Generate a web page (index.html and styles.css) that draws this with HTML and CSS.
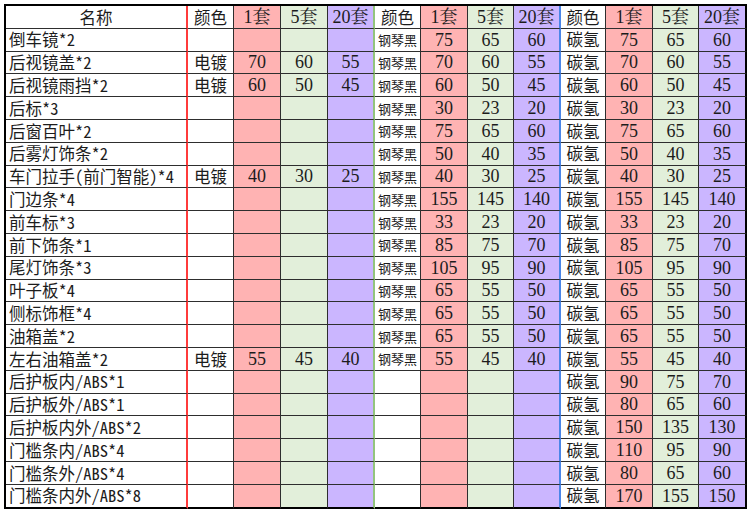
FILE: index.html
```html
<!DOCTYPE html>
<html lang="zh-CN">
<head>
<meta charset="utf-8">
<title>价格表</title>
<link rel="stylesheet" href="styles.css">
</head>
<body>
<table class="sheet">
  <colgroup>
    <col class="w-name"><col class="w46"><col class="w47"><col class="w47"><col class="w47">
    <col class="w46"><col class="w47"><col class="w46"><col class="w47">
    <col class="w45"><col class="w47"><col class="w46"><col class="w48">
  </colgroup>
  <thead>
    <tr>
      <th class="name head">名称</th><th class="clr">颜色</th><th class="p1">1套</th><th class="p5">5套</th><th class="p20 end-g">20套</th>
      <th class="clr">颜色</th><th class="p1">1套</th><th class="p5">5套</th><th class="p20 end-b">20套</th>
      <th class="clr">颜色</th><th class="p1">1套</th><th class="p5">5套</th><th class="p20 end">20套</th>
    </tr>
  </thead>
  <tbody>
    <tr><td class="name">倒车镜*2</td><td class="clr"></td><td class="p1"></td><td class="p5"></td><td class="p20 end-g"></td><td class="clr sm">钢琴黑</td><td class="p1">75</td><td class="p5">65</td><td class="p20 end-b">60</td><td class="clr">碳氢</td><td class="p1">75</td><td class="p5">65</td><td class="p20 end">60</td></tr>
    <tr><td class="name">后视镜盖*2</td><td class="clr">电镀</td><td class="p1">70</td><td class="p5">60</td><td class="p20 end-g">55</td><td class="clr sm">钢琴黑</td><td class="p1">70</td><td class="p5">60</td><td class="p20 end-b">55</td><td class="clr">碳氢</td><td class="p1">70</td><td class="p5">60</td><td class="p20 end">55</td></tr>
    <tr><td class="name">后视镜雨挡*2</td><td class="clr">电镀</td><td class="p1">60</td><td class="p5">50</td><td class="p20 end-g">45</td><td class="clr sm">钢琴黑</td><td class="p1">60</td><td class="p5">50</td><td class="p20 end-b">45</td><td class="clr">碳氢</td><td class="p1">60</td><td class="p5">50</td><td class="p20 end">45</td></tr>
    <tr><td class="name">后标*3</td><td class="clr"></td><td class="p1"></td><td class="p5"></td><td class="p20 end-g"></td><td class="clr sm">钢琴黑</td><td class="p1">30</td><td class="p5">23</td><td class="p20 end-b">20</td><td class="clr">碳氢</td><td class="p1">30</td><td class="p5">23</td><td class="p20 end">20</td></tr>
    <tr><td class="name">后窗百叶*2</td><td class="clr"></td><td class="p1"></td><td class="p5"></td><td class="p20 end-g"></td><td class="clr sm">钢琴黑</td><td class="p1">75</td><td class="p5">65</td><td class="p20 end-b">60</td><td class="clr">碳氢</td><td class="p1">75</td><td class="p5">65</td><td class="p20 end">60</td></tr>
    <tr><td class="name">后雾灯饰条*2</td><td class="clr"></td><td class="p1"></td><td class="p5"></td><td class="p20 end-g"></td><td class="clr sm">钢琴黑</td><td class="p1">50</td><td class="p5">40</td><td class="p20 end-b">35</td><td class="clr">碳氢</td><td class="p1">50</td><td class="p5">40</td><td class="p20 end">35</td></tr>
    <tr><td class="name">车门拉手(前门智能)*4</td><td class="clr">电镀</td><td class="p1">40</td><td class="p5">30</td><td class="p20 end-g">25</td><td class="clr sm">钢琴黑</td><td class="p1">40</td><td class="p5">30</td><td class="p20 end-b">25</td><td class="clr">碳氢</td><td class="p1">40</td><td class="p5">30</td><td class="p20 end">25</td></tr>
    <tr><td class="name">门边条*4</td><td class="clr"></td><td class="p1"></td><td class="p5"></td><td class="p20 end-g"></td><td class="clr sm">钢琴黑</td><td class="p1">155</td><td class="p5">145</td><td class="p20 end-b">140</td><td class="clr">碳氢</td><td class="p1">155</td><td class="p5">145</td><td class="p20 end">140</td></tr>
    <tr><td class="name">前车标*3</td><td class="clr"></td><td class="p1"></td><td class="p5"></td><td class="p20 end-g"></td><td class="clr sm">钢琴黑</td><td class="p1">33</td><td class="p5">23</td><td class="p20 end-b">20</td><td class="clr">碳氢</td><td class="p1">33</td><td class="p5">23</td><td class="p20 end">20</td></tr>
    <tr><td class="name">前下饰条*1</td><td class="clr"></td><td class="p1"></td><td class="p5"></td><td class="p20 end-g"></td><td class="clr sm">钢琴黑</td><td class="p1">85</td><td class="p5">75</td><td class="p20 end-b">70</td><td class="clr">碳氢</td><td class="p1">85</td><td class="p5">75</td><td class="p20 end">70</td></tr>
    <tr><td class="name">尾灯饰条*3</td><td class="clr"></td><td class="p1"></td><td class="p5"></td><td class="p20 end-g"></td><td class="clr sm">钢琴黑</td><td class="p1">105</td><td class="p5">95</td><td class="p20 end-b">90</td><td class="clr">碳氢</td><td class="p1">105</td><td class="p5">95</td><td class="p20 end">90</td></tr>
    <tr><td class="name">叶子板*4</td><td class="clr"></td><td class="p1"></td><td class="p5"></td><td class="p20 end-g"></td><td class="clr sm">钢琴黑</td><td class="p1">65</td><td class="p5">55</td><td class="p20 end-b">50</td><td class="clr">碳氢</td><td class="p1">65</td><td class="p5">55</td><td class="p20 end">50</td></tr>
    <tr><td class="name">侧标饰框*4</td><td class="clr"></td><td class="p1"></td><td class="p5"></td><td class="p20 end-g"></td><td class="clr sm">钢琴黑</td><td class="p1">65</td><td class="p5">55</td><td class="p20 end-b">50</td><td class="clr">碳氢</td><td class="p1">65</td><td class="p5">55</td><td class="p20 end">50</td></tr>
    <tr><td class="name">油箱盖*2</td><td class="clr"></td><td class="p1"></td><td class="p5"></td><td class="p20 end-g"></td><td class="clr sm">钢琴黑</td><td class="p1">65</td><td class="p5">55</td><td class="p20 end-b">50</td><td class="clr">碳氢</td><td class="p1">65</td><td class="p5">55</td><td class="p20 end">50</td></tr>
    <tr><td class="name">左右油箱盖*2</td><td class="clr">电镀</td><td class="p1">55</td><td class="p5">45</td><td class="p20 end-g">40</td><td class="clr sm">钢琴黑</td><td class="p1">55</td><td class="p5">45</td><td class="p20 end-b">40</td><td class="clr">碳氢</td><td class="p1">55</td><td class="p5">45</td><td class="p20 end">40</td></tr>
    <tr><td class="name">后护板内/ABS*1</td><td class="clr"></td><td class="p1"></td><td class="p5"></td><td class="p20 end-g"></td><td class="clr"></td><td class="p1"></td><td class="p5"></td><td class="p20 end-b"></td><td class="clr">碳氢</td><td class="p1">90</td><td class="p5">75</td><td class="p20 end">70</td></tr>
    <tr><td class="name">后护板外/ABS*1</td><td class="clr"></td><td class="p1"></td><td class="p5"></td><td class="p20 end-g"></td><td class="clr"></td><td class="p1"></td><td class="p5"></td><td class="p20 end-b"></td><td class="clr">碳氢</td><td class="p1">80</td><td class="p5">65</td><td class="p20 end">60</td></tr>
    <tr><td class="name">后护板内外/ABS*2</td><td class="clr"></td><td class="p1"></td><td class="p5"></td><td class="p20 end-g"></td><td class="clr"></td><td class="p1"></td><td class="p5"></td><td class="p20 end-b"></td><td class="clr">碳氢</td><td class="p1">150</td><td class="p5">135</td><td class="p20 end">130</td></tr>
    <tr><td class="name">门槛条内/ABS*4</td><td class="clr"></td><td class="p1"></td><td class="p5"></td><td class="p20 end-g"></td><td class="clr"></td><td class="p1"></td><td class="p5"></td><td class="p20 end-b"></td><td class="clr">碳氢</td><td class="p1">110</td><td class="p5">95</td><td class="p20 end">90</td></tr>
    <tr><td class="name">门槛条外/ABS*4</td><td class="clr"></td><td class="p1"></td><td class="p5"></td><td class="p20 end-g"></td><td class="clr"></td><td class="p1"></td><td class="p5"></td><td class="p20 end-b"></td><td class="clr">碳氢</td><td class="p1">80</td><td class="p5">65</td><td class="p20 end">60</td></tr>
    <tr class="last"><td class="name">门槛条内外/ABS*8</td><td class="clr"></td><td class="p1"></td><td class="p5"></td><td class="p20 end-g"></td><td class="clr"></td><td class="p1"></td><td class="p5"></td><td class="p20 end-b"></td><td class="clr">碳氢</td><td class="p1">170</td><td class="p5">155</td><td class="p20 end">150</td></tr>
  </tbody>
</table>
</body>
</html>
```

FILE: styles.css
```css
html, body {
  margin: 0;
  padding: 0;
  background: #ffffff;
}

.sheet {
  margin: 4px 0 0 4px;
  width: 743px;
  table-layout: fixed;
  border-collapse: separate;
  border-spacing: 0;
  border-left: 2px solid #000;
  border-top: 2px solid #000;
}

.w-name { width: 182px; }
.w45 { width: 45px; }
.w46 { width: 46px; }
.w47 { width: 47px; }
.w48 { width: 48px; }

.sheet th,
.sheet td {
  box-sizing: border-box;
  height: 22.8px;
  padding: 0;
  border-right: 1px solid #2e2e2e;
  border-bottom: 1px solid #2e2e2e;
  text-align: center;
  vertical-align: middle;
  font-family: "Liberation Serif", "Noto Serif CJK SC", "Noto Sans CJK SC", serif;
  font-size: 18px;
  font-weight: normal;
  line-height: 1;
  color: #1c1c1c;
  white-space: nowrap;
  overflow: hidden;
}

.sheet .last td {
  height: 23.8px;
  border-bottom: 2px solid #000;
}

.sheet .name {
  text-align: left;
  padding-left: 3px;
  font-family: "Noto Sans Mono CJK SC", "Noto Sans CJK SC", sans-serif;
  font-size: 16.5px;
  border-right: 2px solid #ff3b3b;
}

.sheet .name.head {
  text-align: center;
  padding-left: 0;
}

.sheet .clr {
  font-family: "Noto Sans CJK SC", sans-serif;
  font-size: 16.5px;
  background: #ffffff;
}

.sheet .clr.sm {
  font-size: 13px;
}

.sheet .p1 { background: #ffb3b3; }
.sheet .p5 { background: #e2efda; }
.sheet .p20 { background: #cbb6ff; }

.sheet .end-g { border-right: 2px solid #93c47d; }
.sheet .end-b { border-right: 2px solid #4a86e8; }
.sheet .end { border-right: 2px solid #000; }
```
